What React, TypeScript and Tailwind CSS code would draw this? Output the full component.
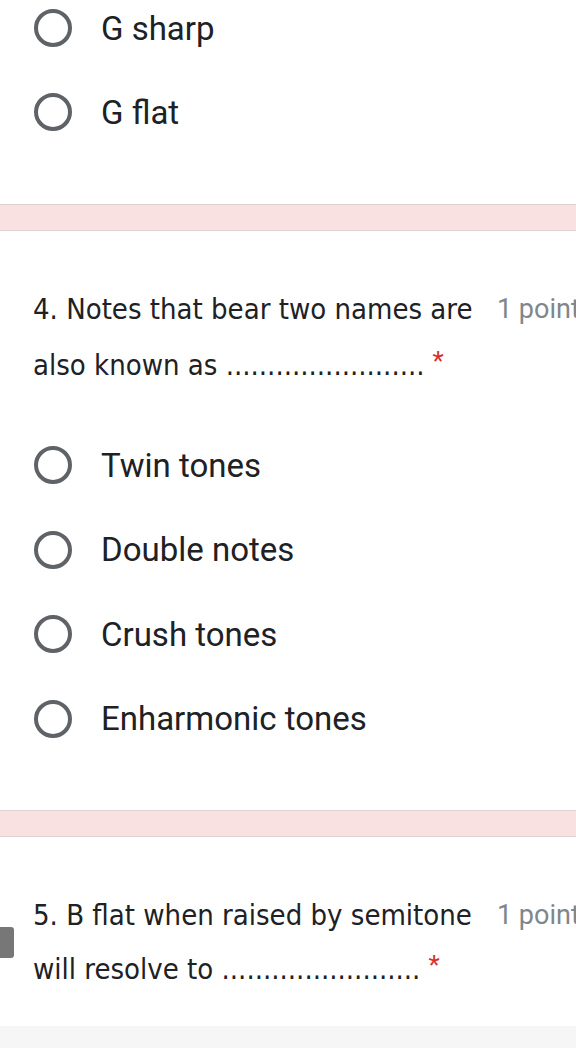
import type { ReactNode } from 'react';

const OPTS_TOP = ['G sharp', 'G flat'];
const OPTS_Q4 = ['Twin tones', 'Double notes', 'Crush tones', 'Enharmonic tones'];

function Radio({ label, h }: { label: string; h: string }) {
  return (
    <div className={`flex items-center ${h}`}>
      <span className="ml-[34px] h-[38px] w-[38px] shrink-0 rounded-full border-[4px] border-[#5f6368]" />
      <span className="ml-[29px] text-[33px] leading-none text-[#202124] [font-family:Roboto,sans-serif]">{label}</span>
    </div>
  );
}

function Band() {
  return <div className="h-[27px] w-full border-y border-[#ddd3d3] bg-[#f9e1e2]" />;
}

function Question({ line1, line2, lh }: { line1: string; line2: ReactNode; lh: string }) {
  return (
    <div className="flex items-start pl-[33px]">
      <div
        className={`w-[450px] shrink-0 text-[29px] text-[#202124] [font-family:'DejaVu_Sans_Condensed','DejaVu_Sans',sans-serif] [font-stretch:condensed] ${lh}`}
      >
        <div>{line1}</div>
        <div className="flex items-start">
          <span>{line2}</span>
          <span className="ml-[8px] mt-[-4px] text-[26px] text-[#d93025] [font-family:Roboto,sans-serif]">*</span>
        </div>
      </div>
      <div className={`ml-[14px] whitespace-nowrap text-[27px] text-[#80868b] [font-family:Roboto,sans-serif] ${lh}`}>1 point</div>
    </div>
  );
}

export default function App() {
  return (
    <div className="relative h-[1048px] w-[576px] overflow-hidden bg-white">
      <div className="-mt-[14px] pb-[50px]">
        {OPTS_TOP.map((o) => (
          <Radio key={o} label={o} h="h-[84px]" />
        ))}
      </div>
      <Band />
      <div className="pt-[50px] pb-[49px]">
        <Question line1="4. Notes that bear two names are" line2="also known as ........................" lh="leading-[56px]" />
        <div className="mt-[30px]">
          {OPTS_Q4.map((o) => (
            <Radio key={o} label={o} h="h-[84.5px]" />
          ))}
        </div>
      </div>
      <Band />
      <div className="h-[189px] pt-[51px]">
        <Question line1="5. B flat when raised by semitone" line2="will resolve to ........................" lh="leading-[54px]" />
      </div>
      <div className="h-[30px] bg-[#f6f6f6]" />
      <div className="absolute left-0 top-[927px] h-[31px] w-[14px] rounded-r-[3px] bg-[#777]" />
    </div>
  );
}
